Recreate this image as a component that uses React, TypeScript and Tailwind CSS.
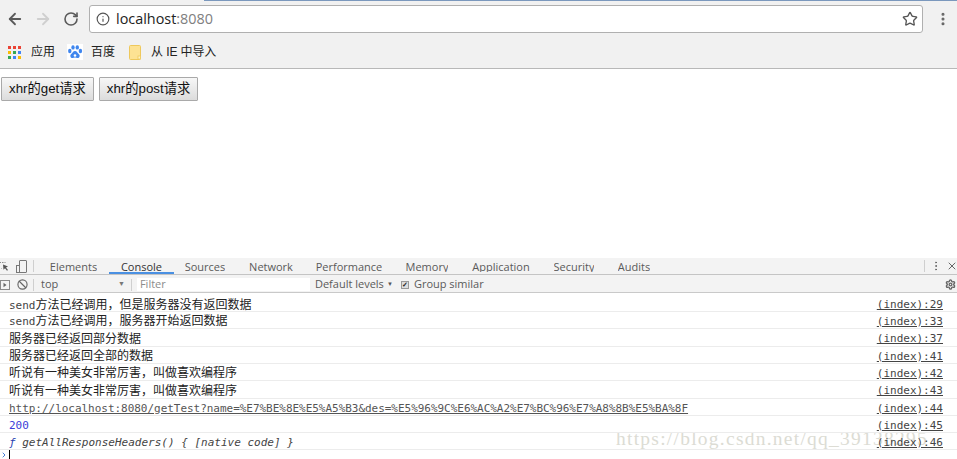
import { ArrowLeft, ArrowRight, RotateCw, Info, Star, EllipsisVertical, Ban, X, Settings, ChevronRight } from "lucide-react";

const tabs = [
  { label: "Elements", w: "w-[71px]" },
  { label: "Console", w: "w-[65px]", active: true },
  { label: "Sources", w: "w-[62px]" },
  { label: "Network", w: "w-[70px]" },
  { label: "Performance", w: "w-[86px]" },
  { label: "Memory", w: "w-[70px]" },
  { label: "Application", w: "w-[78px]" },
  { label: "Security", w: "w-[68px]" },
  { label: "Audits", w: "w-[52px]" },
];

const rows = [
  { prefix: "send", text: "方法已经调用，但是服务器没有返回数据", src: "(index):29", h: "h-[18px] pt-[4px]" },
  { prefix: "send", text: "方法已经调用，服务器开始返回数据", src: "(index):33", h: "h-[17px] pt-[2px]" },
  { prefix: "", text: "服务器已经返回部分数据", src: "(index):37", h: "h-[18px] pt-[2px]" },
  { prefix: "", text: "服务器已经返回全部的数据", src: "(index):41", h: "h-[17px] pt-[2px]" },
  { prefix: "", text: "听说有一种美女非常厉害，叫做喜欢编程序", src: "(index):42", h: "h-[17px] pt-[2px]" },
  { prefix: "", text: "听说有一种美女非常厉害，叫做喜欢编程序", src: "(index):43", h: "h-[18px] pt-[2px]" },
];

const mono = "font-['DejaVu_Sans_Mono','Liberation_Mono','Noto_Sans_CJK_SC',monospace]";

function AppsGrid() {
  const colors = ["#ea4335", "#ea4335", "#ea4335", "#fbbc05", "#34a853", "#4285f4", "#34a853", "#4285f4", "#fbbc05"];
  return (
    <div className="grid h-[13px] w-[13px] grid-cols-3 gap-[2px]">
      {colors.map((c, i) => (
        <svg key={i} width="3" height="3" viewBox="0 0 3 3">
          <rect width="3" height="3" fill={c} />
        </svg>
      ))}
    </div>
  );
}

function Paw() {
  return (
    <svg width="16" height="16" viewBox="0 0 16 16">
      <rect width="16" height="16" fill="#fff" />
      <ellipse cx="2.8" cy="7" rx="1.7" ry="2.2" fill="#3f86ee" />
      <ellipse cx="6" cy="3.4" rx="1.7" ry="2.2" fill="#3f86ee" />
      <ellipse cx="10.3" cy="3.4" rx="1.7" ry="2.2" fill="#3f86ee" />
      <ellipse cx="13.4" cy="7" rx="1.7" ry="2.2" fill="#3f86ee" />
      <path d="M8 7c-2 0-2.5 2-4 3.2-1.3 1.2-.6 3.8 1.6 3.8 1 0 1.6-.4 2.4-.4s1.500.4 2.500.4c2.200 0 2.800-2.600 1.500-3.800C10.500 9 10 7 8 7z" fill="#3f86ee" />
      <circle cx="8" cy="11.500" r="1.300" fill="#fff" />
    </svg>
  );
}

function Folder() {
  return (
    <svg width="12" height="15" viewBox="0 0 12 15">
      <path d="M.5 1.500a1 1 0 0 1 1-1h9a1 1 0 0 1 1 1v12a1 1 0 0 1-1 1h-9a1 1 0 0 1-1-1z" fill="#fde293" stroke="#eec85c" />
      <rect x="9" y="11" width="2.500" height="3" fill="#fff3c4" stroke="#eec85c" strokeWidth=".8" />
    </svg>
  );
}

function InspectIcon() {
  return (
    <svg width="10" height="10" viewBox="0 0 10 10" fill="none">
      <path d="M.5 1.500h6M.5 1.500v6h2" stroke="#8a8a8a" strokeDasharray="1.500 1" />
      <path d="M4 3.500l5 2-2 1 2 2.500-1 .8-2-2.500-1.500 1.500z" fill="#555" />
    </svg>
  );
}

function DeviceIcon() {
  return (
    <svg width="11" height="13" viewBox="0 0 11 13" fill="none" stroke="#777">
      <rect x="3.500" y=".5" width="7" height="12" rx=".5" />
      <rect x=".5" y="5.500" width="3" height="7" fill="#f3f3f3" />
    </svg>
  );
}

function SidebarIcon() {
  return (
    <svg width="10" height="10" viewBox="0 0 10 10">
      <rect x=".5" y=".5" width="9" height="9" fill="none" stroke="#8a8a8a" />
      <path d="M3.500 2.800L6.500 5 3.500 7.200z" fill="#666" />
    </svg>
  );
}

export default function App() {
  return (
    <div className="relative flex h-[459px] w-[957px] flex-col overflow-hidden bg-white font-['Liberation_Sans','Noto_Sans_CJK_SC',sans-serif]">
      {/* Chrome toolbar */}
      <div className="relative h-[69px] shrink-0 border-b border-[#b8b8b8] bg-[#f1f1f1]">
        <div className="absolute left-[204px] top-0 h-px w-[753px] bg-[#7b98bd]" />
        <div className="flex h-[34px] items-center pt-[3px]">
          <ArrowLeft size={18} strokeWidth={2.4} className="ml-[6px] text-[#5a5a5a]" />
          <ArrowRight size={18} strokeWidth={2.4} className="ml-[10px] text-[#cfcfcf]" />
          <RotateCw size={16} strokeWidth={2.4} className="ml-[11px] text-[#5a5a5a]" />
          <div className="ml-[10px] flex h-[28px] w-[834px] items-center rounded-[3px] border border-[#b0b0b0] bg-white">
            <Info size={14} strokeWidth={2} className="ml-[6px] text-[#555]" />
            <span className="ml-[6px] font-['Open_Sans',sans-serif] text-[14.4px] text-[#222]">
              localhost<span className="text-[#808080]">:8080</span>
            </span>
            <Star size={16} strokeWidth={2} className="ml-auto mr-[4px] text-[#555]" />
          </div>
          <EllipsisVertical size={16} strokeWidth={2.6} className="ml-[12px] text-[#666]" />
        </div>
        <div className="flex h-[34px] items-center pt-[2px] text-[12px] text-[#222]">
          <div className="ml-[8px]"><AppsGrid /></div>
          <span className="ml-[10px]">应用</span>
          <div className="ml-[12px]"><Paw /></div>
          <span className="ml-[8px]">百度</span>
          <div className="ml-[14px]"><Folder /></div>
          <span className="ml-[10px] tracking-[-0.1px]">从 IE 中导入</span>
        </div>
      </div>

      {/* Page */}
      <div className="flex h-[189px] shrink-0 items-start gap-[5px] pl-[1px] pt-[8px]">
        <button className="h-[24px] w-[93px] rounded-[1px] border border-[#a9a9a9] bg-gradient-to-b from-[#f7f7f7] to-[#dcdcdc] text-[13.3px] text-[#111]">
          xhr的get请求
        </button>
        <button className="h-[24px] w-[99px] rounded-[1px] border border-[#a9a9a9] bg-gradient-to-b from-[#f7f7f7] to-[#dcdcdc] text-[13.3px] text-[#111]">
          xhr的post请求
        </button>
      </div>

      {/* Devtools tabs */}
      <div className="flex h-[17px] shrink-0 items-center border-b border-[#c4c4c4] bg-[#f3f3f3] font-['Open_Sans',sans-serif] text-[11px] text-[#5a5a5a]">
        <div className="ml-[-1px]"><InspectIcon /></div>
        <div className="ml-[7px]"><DeviceIcon /></div>
        <div className="ml-[6px] h-[12px] w-px bg-[#cfcfcf]" />
        {tabs.map((t, i) => (
          <div
            key={t.label}
            className={`flex h-full items-start justify-center pt-[3px] ${t.w} ${i === 0 ? "ml-[4px]" : ""} ${t.active ? "border-b-2 border-[#4a90e2] text-[#333]" : ""}`}
          >
            {/* descenders get cut off by the tab strip, same as the screenshot */}
            <span className="h-[11px] overflow-hidden leading-[11px]">{t.label}</span>
          </div>
        ))}
        <div className="ml-auto h-[12px] w-px bg-[#cfcfcf]" />
        <EllipsisVertical size={12} className="ml-[5px] text-[#666]" />
        <X size={12} strokeWidth={2} className="ml-[4px] mr-[-1px] text-[#666]" />
      </div>

      {/* Console filter bar */}
      <div className="flex h-[18px] shrink-0 items-center border-b border-[#c9c9c9] bg-[#f3f3f3] pt-[2px] font-['Open_Sans',sans-serif] text-[11px] text-[#5a5a5a]">
        <SidebarIcon />
        <Ban size={11} strokeWidth={2.5} className="ml-[7px] text-[#666]" />
        <div className="ml-[5px] h-[12px] w-px bg-[#cfcfcf]" />
        <span className="ml-[7px] w-[77px]">top</span>
        <span className="text-[7px] text-[#777]">▼</span>
        <div className="ml-[6px] h-[12px] w-px bg-[#cfcfcf]" />
        <div className="ml-[5px] flex h-[13px] w-[173px] items-center bg-white pl-[3px] text-[#8c8c8c]">Filter</div>
        <span className="ml-[5px] w-[70px] whitespace-nowrap">Default levels</span>
        <span className="ml-[2px] text-[6px] text-[#555]">▼</span>
        <span className="ml-[8px] flex h-[8px] w-[8px] items-center justify-center border border-[#999] bg-[#ddd] text-[7px] font-bold leading-none text-[#222]">✓</span>
        <span className="ml-[5px]">Group similar</span>
        <Settings size={11} strokeWidth={3} className="ml-auto mr-[1px] text-[#666]" />
      </div>

      {/* Console messages, above the watermark */}
      <div className="relative z-10 flex flex-col pt-[1px] text-[#222]">
        {rows.map((r) => (
          <div key={r.src} className={`flex shrink-0 items-center border-b border-[#ececec] pl-[9px] pr-[14px] ${r.h}`}>
            <span className={`${mono} text-[12px] leading-none`}>
              {r.prefix && <span className="text-[11px] text-[#444]">{r.prefix}</span>}
              {r.text}
            </span>
            <a className={`${mono} ml-auto text-[11px] leading-none text-[#444] underline`}>{r.src}</a>
          </div>
        ))}
        <div className="flex h-[17px] shrink-0 items-center border-b border-[#ececec] pl-[9px] pr-[14px] pt-[2px]">
          <a className={`${mono} text-[11px] leading-none tracking-[-0.03px] text-[#555] underline`}>
            http://localhost:8080/getTest?name=%E7%BE%8E%E5%A5%B3&amp;des=%E5%96%9C%E6%AC%A2%E7%BC%96%E7%A8%8B%E5%BA%8F
          </a>
          <a className={`${mono} ml-auto text-[11px] leading-none text-[#444] underline`}>(index):44</a>
        </div>
        <div className="flex h-[17px] shrink-0 items-center border-b border-[#ececec] pl-[9px] pr-[14px] pt-[2px]">
          <span className={`${mono} text-[11px] leading-none text-[#3c3cd8]`}>200</span>
          <a className={`${mono} ml-auto text-[11px] leading-none text-[#444] underline`}>(index):45</a>
        </div>
        <div className="flex h-[17px] shrink-0 items-center border-b border-[#ececec] pl-[9px] pr-[14px] pt-[2px]">
          <span className={`${mono} text-[11px] italic leading-none text-[#444]`}>
            <span className="text-[#2a3fb0]">ƒ</span> getAllResponseHeaders() {"{"} [native code] {"}"}
          </span>
          <a className={`${mono} ml-auto text-[11px] leading-none text-[#444] underline`}>(index):46</a>
        </div>
        <div className="flex h-[9px] items-center">
          <ChevronRight size={8} strokeWidth={3} className="text-[#4a7fd8]" />
          <div className="ml-px h-[9px] w-px bg-black" />
        </div>
      </div>

      {/* Blog watermark */}
      <div className="absolute left-[616px] top-[429px] font-['Liberation_Serif',serif] text-[19.5px] leading-none tracking-[1.25px] text-[#dcdcd4]">
        https://blog.csdn.net/qq_39138295
      </div>
    </div>
  );
}
